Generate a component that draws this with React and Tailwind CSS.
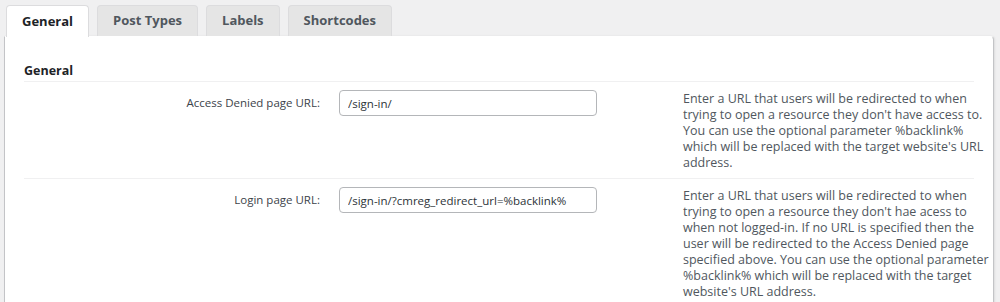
const tabs = ["General", "Post Types", "Labels", "Shortcodes"];

const rows = [
  {
    label: "Access Denied page URL:",
    value: "/sign-in/",
    lines: [
      "Enter a URL that users will be redirected to when",
      "trying to open a resource they don't have access to.",
      "You can use the optional parameter %backlink%",
      "which will be replaced with the target website's URL",
      "address.",
    ],
  },
  {
    label: "Login page URL:",
    value: "/sign-in/?cmreg_redirect_url=%backlink%",
    lines: [
      "Enter a URL that users will be redirected to when",
      "trying to open a resource they don't hae acess to",
      "when not logged-in. If no URL is specified then the",
      "user will be redirected to the Access Denied page",
      "specified above. You can use the optional parameter",
      "%backlink% which will be replaced with the target",
      "website's URL address.",
    ],
  },
];

const App = () => {
  return (
    <div className="h-[302px] overflow-hidden bg-[#f0f0f1] pt-[5px] font-['Open_Sans',sans-serif] text-[#3c434a]">
      <div className="flex gap-[8px] pl-[6px]">
        {tabs.map((tab, i) => (
          <div
            key={tab}
            className={
              i === 0
                ? "relative z-10 -mb-px flex h-[32px] items-center rounded-t-[4px] border border-b-0 border-[#dcdcde] bg-white px-[15px] text-[13px] font-bold text-[#1d2327]"
                : "flex h-[31px] items-center rounded-t-[4px] border border-b-0 border-[#dcdcde] bg-[#e5e5e5] px-[15px] text-[13px] font-bold text-[#50575e]"
            }
          >
            {tab}
          </div>
        ))}
      </div>
      <div className="ml-[4px] h-[300px] w-[990px] rounded-tr-[4px] border border-[#c3c4c7] border-t-white bg-white px-[19px] shadow-[1px_0_2px_rgba(0,0,0,0.08)]">
        <h2 className="border-b border-[#f0f0f1] pt-[24px] text-[12.5px] font-bold leading-[20px] text-[#1d2327]">
          General
        </h2>
        {rows.map((row) => (
          <div
            key={row.label}
            className="flex border-b border-[#f0f0f1] pt-[8px] pb-[7px]"
          >
            <div className="flex h-[26px] w-[296px] shrink-0 items-center justify-end text-right text-[11.5px]">
              {row.label}
            </div>
            <input
              readOnly
              value={row.value}
              className="ml-[19px] h-[26px] w-[258px] shrink-0 rounded-[4px] border border-[#b4b6b9] px-[8px] text-[11.5px] text-[#2c3338] outline-none"
            />
            <p className="ml-[86px] pt-[1px] text-[12.5px] leading-[16px] text-[#50575e]">
              {row.lines.map((line, i) => (
                <span key={i} className="block whitespace-nowrap">
                  {line}
                </span>
              ))}
            </p>
          </div>
        ))}
      </div>
    </div>
  );
};

export default App;
